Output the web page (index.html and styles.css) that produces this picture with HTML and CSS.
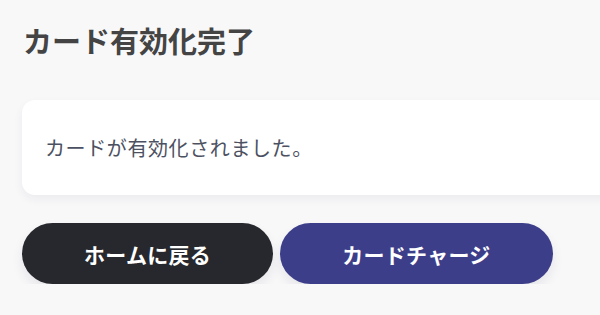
FILE: index.html
```html
<!DOCTYPE html>
<html lang="ja">
<head>
<meta charset="utf-8">
<title>カード有効化完了</title>
<link rel="stylesheet" href="styles.css">
</head>
<body>
<main class="page">
  <h1 class="title">カード有効化完了</h1>
  <section class="card">
    <p class="message">カードが有効化されました。</p>
  </section>
  <div class="actions">
    <button class="btn btn-dark" type="button">ホームに戻る</button>
    <button class="btn btn-primary" type="button">カードチャージ</button>
  </div>
</main>
</body>
</html>
```
FILE: styles.css
```css
html, body {
  margin: 0;
  padding: 0;
  background: #f8f8f9;
  overflow: hidden;
}
body {
  width: 600px;
  height: 315px;
  font-family: "Noto Sans CJK JP", "Noto Sans", sans-serif;
}
.page {
  width: 600px;
  overflow: hidden;
  padding: 21px 0 0 22px;
  box-sizing: border-box;
  display: flex;
  flex-direction: column;
}
.title {
  margin: 0 0 0 1px;
  font-size: 29px;
  line-height: 38px;
  font-weight: 700;
  color: #444444;
  letter-spacing: 0;
}
.card {
  margin-top: 41px;
  width: 640px;
  flex-shrink: 0;
  height: 95px;
  box-sizing: border-box;
  background: #ffffff;
  border-radius: 13px;
  box-shadow: 0 4px 10px rgba(30, 30, 60, 0.06);
  display: flex;
  align-items: center;
  padding-left: 23px;
}
.message {
  margin: 0;
  font-size: 20px;
  line-height: 28px;
  color: #4c5162;
  letter-spacing: 0.6px;
}
.actions {
  margin-top: 28px;
  display: flex;
  gap: 7px;
}
.btn {
  height: 61px;
  border: none;
  border-radius: 31px;
  padding: 0 62px;
  font-family: inherit;
  font-size: 21px;
  font-weight: 700;
  letter-spacing: 0.3px;
  color: #ffffff;
  box-shadow: 0 6px 12px rgba(30, 30, 60, 0.08);
}
.btn-dark {
  background: #27282d;
}
.btn-primary {
  background: #3d3e8a;
}
```
